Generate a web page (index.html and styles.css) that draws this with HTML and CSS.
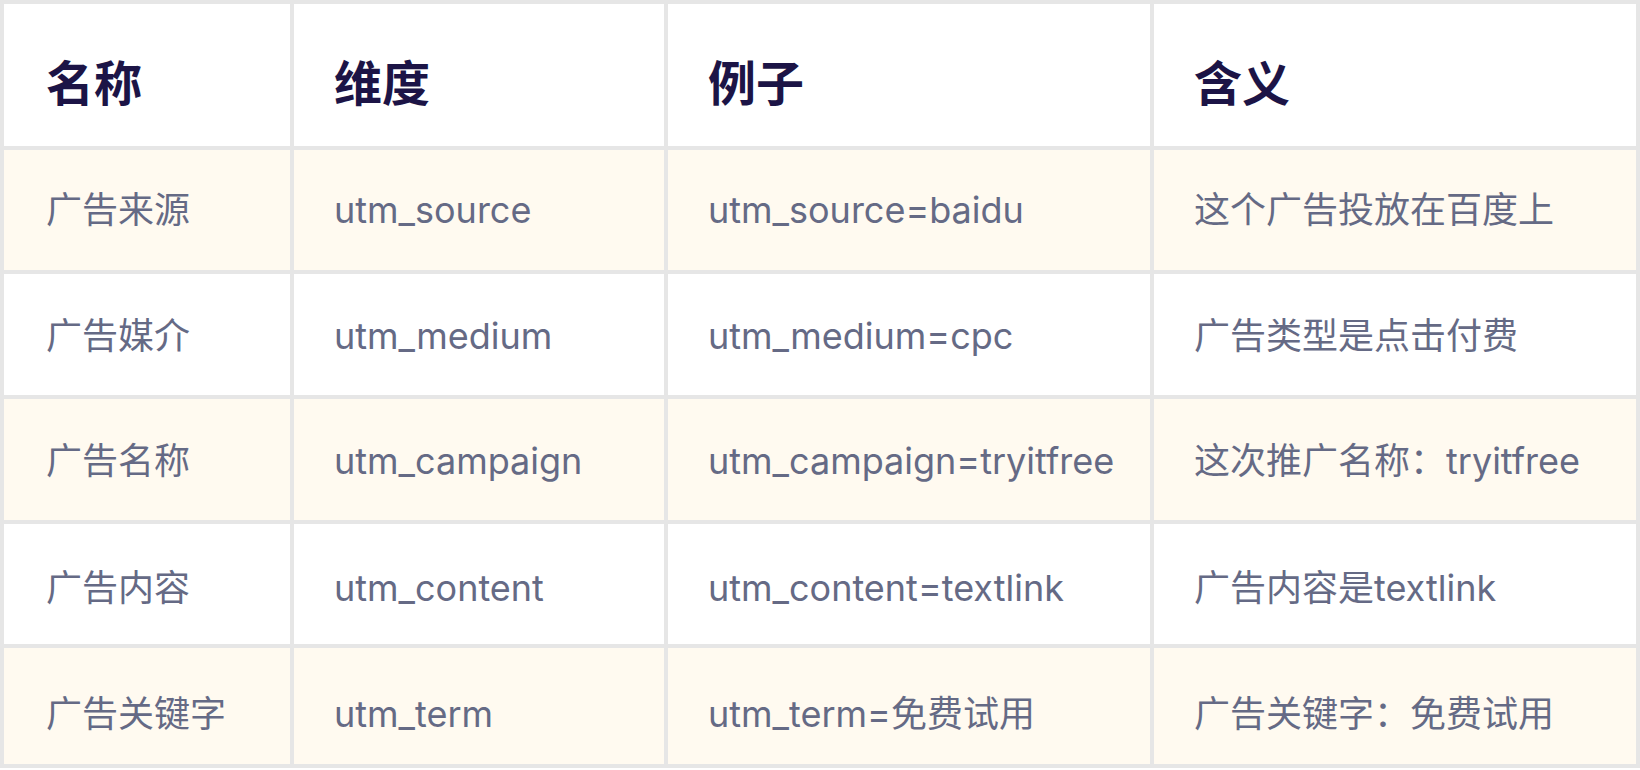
FILE: index.html
```html
<!DOCTYPE html>
<html lang="zh-CN">
<head>
<meta charset="utf-8">
<title>UTM 参数</title>
<link rel="stylesheet" href="styles.css">
</head>
<body>
<table class="utm-table">
  <colgroup>
    <col class="col-name">
    <col class="col-dim">
    <col class="col-example">
    <col class="col-meaning">
  </colgroup>
  <thead>
    <tr class="head-row">
      <th class="first">名称</th>
      <th>维度</th>
      <th>例子</th>
      <th>含义</th>
    </tr>
  </thead>
  <tbody>
    <tr class="row odd">
      <td class="first">广告来源</td>
      <td>utm_source</td>
      <td>utm_source=baidu</td>
      <td>这个广告投放在百度上</td>
    </tr>
    <tr class="row">
      <td class="first">广告媒介</td>
      <td>utm_medium</td>
      <td>utm_medium=cpc</td>
      <td>广告类型是点击付费</td>
    </tr>
    <tr class="row odd">
      <td class="first">广告名称</td>
      <td>utm_campaign</td>
      <td>utm_campaign=tryitfree</td>
      <td>这次推广名称：tryitfree</td>
    </tr>
    <tr class="row">
      <td class="first">广告内容</td>
      <td>utm_content</td>
      <td>utm_content=textlink</td>
      <td>广告内容是textlink</td>
    </tr>
    <tr class="row odd">
      <td class="first">广告关键字</td>
      <td>utm_term</td>
      <td>utm_term=免费试用</td>
      <td>广告关键字：免费试用</td>
    </tr>
  </tbody>
</table>
</body>
</html>
```

FILE: styles.css
```css
html, body {
  margin: 0;
  padding: 0;
  background: #ffffff;
}

body {
  font-family: Inter, "Noto Sans CJK SC", sans-serif;
}

.utm-table {
  width: 1640px;
  border-collapse: separate;
  border-spacing: 4px;
  background: #e6e6e6;
  table-layout: fixed;
}

.col-name { width: 286px; }
.col-dim { width: 370px; }
.col-example { width: 482px; }
.col-meaning { width: 482px; }

.utm-table th,
.utm-table td {
  padding: 0 0 0 40px;
  text-align: left;
  white-space: nowrap;
}

.utm-table .first {
  padding-left: 42px;
}

.head-row th {
  height: 142px;
  box-sizing: border-box;
  padding-top: 10px;
  background: #ffffff;
  font-family: "Noto Sans CJK SC", sans-serif;
  font-size: 48px;
  line-height: 60px;
  font-weight: 700;
  color: #1c1446;
  vertical-align: middle;
}

.row td {
  height: 120px;
  box-sizing: border-box;
  background: #ffffff;
  font-size: 36px;
  line-height: 50px;
  color: #656a85;
  vertical-align: middle;
}

.row:nth-child(2) td,
.row:nth-child(3) td {
  height: 121px;
  padding-top: 3px;
}

.row:nth-child(4) td {
  padding-top: 7px;
}

.row:nth-child(5) td {
  height: 116px;
  padding-top: 15px;
}

.row.odd td {
  background: #fffaf0;
}
```
